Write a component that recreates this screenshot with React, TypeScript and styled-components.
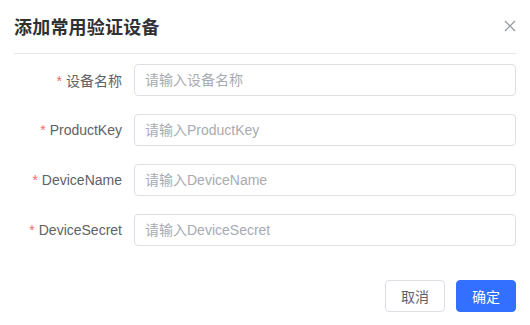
import React from "react";
import styled, { createGlobalStyle } from "styled-components";

const GlobalStyle = createGlobalStyle`
  html, body {
    margin: 0;
    padding: 0;
    background: #ffffff;
    font-family: "Liberation Sans", "Noto Sans CJK SC", sans-serif;
  }
  * { box-sizing: border-box; }
`;

const Dialog = styled.div`
  width: 530px;
  height: 325px;
  background: #ffffff;
  display: flex;
  flex-direction: column;
`;

const Header = styled.div`
  margin: 0 14px;
  height: 54px;
  border-bottom: 1px solid #e4e7ed;
  display: flex;
  align-items: center;
  justify-content: space-between;
  padding-bottom: 2px;
`;

const Title = styled.h2`
  margin: 0;
  font-size: 18px;
  font-weight: 700;
  color: #303133;
  letter-spacing: 0.2px;
`;

const CloseButton = styled.button`
  border: none;
  background: none;
  padding: 0;
  width: 14px;
  height: 14px;
  margin-right: -1px;
  display: flex;
  align-items: center;
  justify-content: center;
  color: #909399;
  cursor: pointer;
`;

const Form = styled.form`
  padding: 10px 14px 0;
  display: flex;
  flex-direction: column;
  gap: 18px;
`;

const Row = styled.div`
  display: flex;
  align-items: center;
  height: 32px;
`;

const Label = styled.label`
  width: 120px;
  padding-right: 12px;
  text-align: right;
  font-size: 14px;
  color: #606266;
`;

const Required = styled.span`
  color: #f56c6c;
  margin-right: 4px;
`;

const Input = styled.input`
  flex: 1;
  height: 32px;
  border: 1px solid #dcdfe6;
  border-radius: 4px;
  padding: 0 10px;
  font-size: 14px;
  font-family: inherit;
  color: #606266;
  outline: none;
  &::placeholder {
    color: #a8abb2;
  }
`;

const Footer = styled.div`
  margin-top: 34px;
  padding: 0 14px;
  display: flex;
  justify-content: flex-end;
  gap: 11px;
`;

const Button = styled.button<{ $primary?: boolean }>`
  height: 32px;
  padding: 0 15px;
  border-radius: 4px;
  font-size: 14px;
  font-family: inherit;
  border: 1px solid ${(p) => (p.$primary ? "#3370ff" : "#dcdfe6")};
  background: ${(p) => (p.$primary ? "#3370ff" : "#ffffff")};
  color: ${(p) => (p.$primary ? "#ffffff" : "#606266")};
  cursor: pointer;
`;

const fields = [
  { label: "设备名称", name: "设备名称" },
  { label: "ProductKey", name: "ProductKey" },
  { label: "DeviceName", name: "DeviceName" },
  { label: "DeviceSecret", name: "DeviceSecret" },
];

export default function App() {
  return (
    <>
      <GlobalStyle />
      <Dialog>
        <Header>
          <Title>添加常用验证设备</Title>
          <CloseButton aria-label="close">
            <svg width="12" height="12" viewBox="0 0 12 12">
              <path d="M1 1L11 11M11 1L1 11" stroke="currentColor" strokeWidth="1.2" fill="none" />
            </svg>
          </CloseButton>
        </Header>
        <Form>
          {fields.map((f) => (
            <Row key={f.name}>
              <Label>
                <Required>*</Required>
                {f.label}
              </Label>
              <Input placeholder={`请输入${f.name}`} />
            </Row>
          ))}
        </Form>
        <Footer>
          <Button type="button">取消</Button>
          <Button type="button" $primary>
            确定
          </Button>
        </Footer>
      </Dialog>
    </>
  );
}
